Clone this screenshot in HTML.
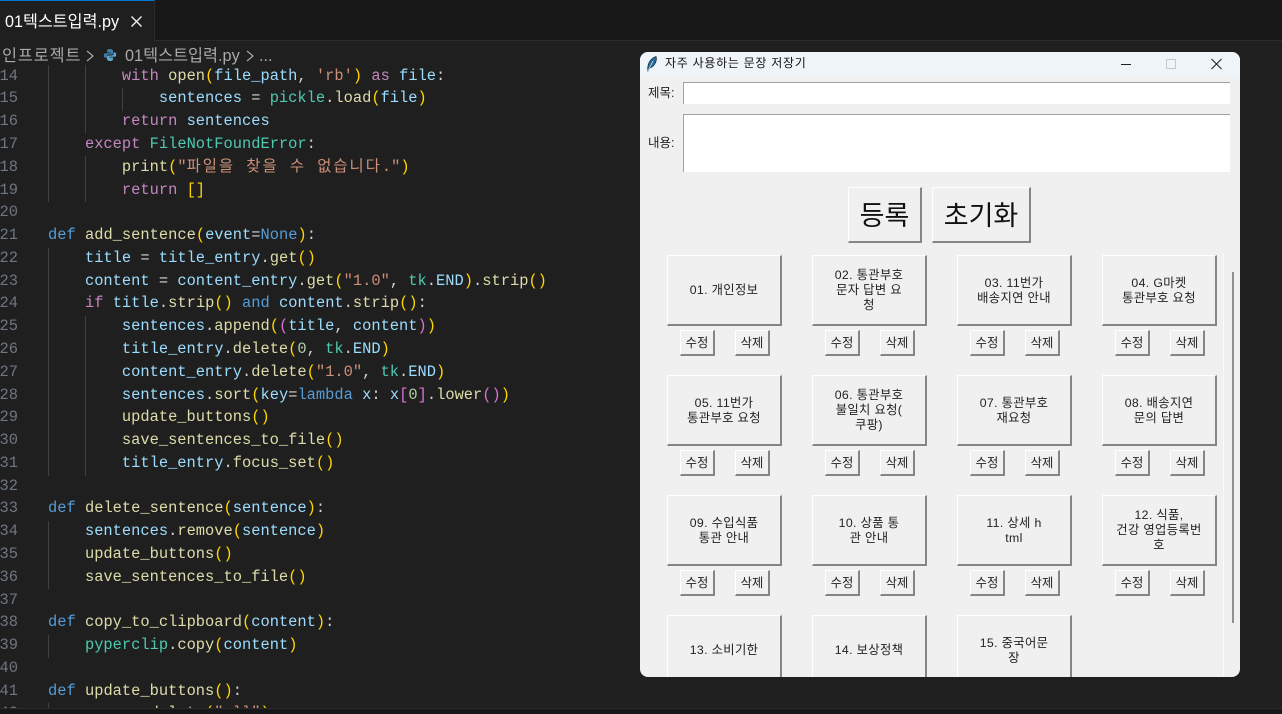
<!DOCTYPE html>
<html lang="ko"><head><meta charset="utf-8"><style>
html,body{margin:0;padding:0;background:#1f1f1f}
body{width:1282px;height:714px;position:relative;overflow:hidden;font-family:"Liberation Sans","Noto Sans CJK KR",sans-serif}
div{position:absolute;box-sizing:border-box}
#tabbar{left:0;top:0;width:1282px;height:41px;background:#181818;border-bottom:1px solid #2b2b2b}
#tab{left:0;top:0;width:155px;height:42px;background:#1f1f1f;border-top:1px solid #0078d4;border-right:1px solid #2b2b2b;color:#fff;font-size:16.2px;line-height:42px;padding-left:5px;white-space:nowrap}
#crumb{left:0;top:45px;height:22px;line-height:22px;font-size:16.3px;color:#a9a9a9;white-space:nowrap}
#code{left:0;top:64.6px;width:640px;height:643.4px;overflow:hidden}
#code pre{position:absolute;left:48px;top:0;margin:0;font:15.4px/22.78px "Liberation Mono","Noto Sans CJK KR",monospace;color:#d4d4d4}
#nums{position:absolute;left:-40px;width:58px;top:0;text-align:right;font:15.4px/22.78px "Liberation Mono",monospace;color:#6e7681;white-space:pre}
.g{width:1px;background:#404040}
#statusline{left:0;top:708px;width:1282px;height:6px;background:#181818;border-top:1px solid #2b2b2b}
.k{color:#c586c0}.d{color:#569cd6}.f{color:#dcdcaa}.v{color:#9cdcfe}.c{color:#4ec9b0}.s{color:#ce9178}.n{color:#b5cea8}.y{color:#ffd700}.p{color:#da70d6}.b{color:#179fff}
.h{letter-spacing:2px}
#win{left:640px;top:52px;width:600px;height:625px;background:#f0f0f0;border-radius:8px;overflow:hidden;color:#000}
#tb{left:0;top:0;width:600px;height:25px;background:#eff4f9}
#ttl{left:25px;top:2px;font-size:12px;line-height:18px;color:#111;white-space:nowrap;letter-spacing:.72px}
.ent{background:#fff;border-top:1px solid #a0a0a0;border-left:1px solid #a0a0a0}
.lb{font-size:12.5px;line-height:16px;color:#222;white-space:nowrap}
.bt{background:#f0f0f0;border-top:1px solid #fff;border-left:1px solid #fff;border-right:2px solid #858585;border-bottom:2px solid #858585;display:flex;align-items:center;justify-content:center;text-align:center;color:#222}
.m{width:115px;height:71px;font-size:12.3px;letter-spacing:.35px;line-height:15px;padding:1px 4px 0}
.e{width:35px;height:26px;font-size:12.3px;line-height:15px;padding-top:1px}
.big{font-size:27px;line-height:34px;color:#111;font-weight:400;padding-top:3px}
</style></head><body>
<div id="tabbar"></div>
<div id="tab">01텍스트입력.py<svg style="position:absolute;left:130px;top:14px" width="13" height="13" viewBox="0 0 13 13"><path d="M1.5 1.5L11.5 11.5M11.5 1.5L1.5 11.5" stroke="#e8e8e8" stroke-width="1.5" fill="none"/></svg></div>
<div id="crumb"><span style="position:absolute;left:2px;letter-spacing:.9px">인프로젝트</span><svg style="position:absolute;left:85px;top:5px" width="10" height="12" viewBox="0 0 10 12"><path d="M2 1L8 6L2 11" stroke="#a9a9a9" stroke-width="1.2" fill="none"/></svg><svg style="position:absolute;left:103px;top:3px" width="14" height="14" viewBox="0 0 14 14"><path d="M7 1C4.5 1 4 2 4 3V4.500H7.500V5.200H2.500C1.200 5.200 .8 6.400 .8 7.400S1.400 9.800 2.500 9.800H4V8C4 7 4.800 6.500 5.600 6.500H8.600C9.400 6.500 10 6 10 5V3C10 2 9 1 7 1Z" fill="#3f7ca8"/><path d="M7 13C9.500 13 10 12 10 11V9.500H6.500V8.800H11.500C12.800 8.800 13.200 7.600 13.200 6.600S12.600 4.200 11.500 4.200H10.600V6C10.600 7 9.200 7.500 8.400 7.500H5.400C4.600 7.500 4 8 4 9V11C4 12 5 13 7 13Z" fill="#5fa6cf"/></svg><span style="position:absolute;left:125px;white-space:nowrap">01텍스트입력.py</span><svg style="position:absolute;left:245px;top:5px" width="10" height="12" viewBox="0 0 10 12"><path d="M2 1L8 6L2 11" stroke="#a9a9a9" stroke-width="1.2" fill="none"/></svg><span style="position:absolute;left:259px">...</span></div>
<div id="code">
<div id="nums">14
15
16
17
18
19
20
21
22
23
24
25
26
27
28
29
30
31
32
33
34
35
36
37
38
39
40
41
42</div>
<div class="g" style="left:48px;top:0;height:137px"></div>
<div class="g" style="left:85px;top:0;height:68px"></div>
<div class="g" style="left:122px;top:23px;height:23px"></div>
<div class="g" style="left:85px;top:91px;height:46px"></div>
<div class="g" style="left:48px;top:183px;height:228px"></div>
<div class="g" style="left:85px;top:251px;height:160px"></div>
<div class="g" style="left:48px;top:456px;height:68px"></div>
<div class="g" style="left:48px;top:570px;height:23px"></div>
<div class="g" style="left:48px;top:638px;height:10px"></div>
<pre>        <span class="k">with</span> <span class="f">open</span><span class="y">(</span><span class="v">file_path</span>, <span class="s">'rb'</span><span class="y">)</span> <span class="k">as</span> <span class="v">file</span>:
            <span class="v">sentences</span> = <span class="c">pickle</span>.<span class="f">load</span><span class="y">(</span><span class="v">file</span><span class="y">)</span>
        <span class="k">return</span> <span class="v">sentences</span>
    <span class="k">except</span> <span class="c">FileNotFoundError</span>:
        <span class="f">print</span><span class="y">(</span><span class="s">"<span class="h">파일을 찾을 수 없습니다</span>."</span><span class="y">)</span>
        <span class="k">return</span> <span class="y">[]</span>

<span class="d">def</span> <span class="f">add_sentence</span><span class="y">(</span><span class="v">event</span>=<span class="d">None</span><span class="y">)</span>:
    <span class="v">title</span> = <span class="v">title_entry</span>.<span class="f">get</span><span class="y">()</span>
    <span class="v">content</span> = <span class="v">content_entry</span>.<span class="f">get</span><span class="y">(</span><span class="s">"1.0"</span>, <span class="c">tk</span>.<span class="v">END</span><span class="y">)</span>.<span class="f">strip</span><span class="y">()</span>
    <span class="k">if</span> <span class="v">title</span>.<span class="f">strip</span><span class="y">()</span> <span class="d">and</span> <span class="v">content</span>.<span class="f">strip</span><span class="y">()</span>:
        <span class="v">sentences</span>.<span class="f">append</span><span class="y">(</span><span class="p">(</span><span class="v">title</span>, <span class="v">content</span><span class="p">)</span><span class="y">)</span>
        <span class="v">title_entry</span>.<span class="f">delete</span><span class="y">(</span><span class="n">0</span>, <span class="c">tk</span>.<span class="v">END</span><span class="y">)</span>
        <span class="v">content_entry</span>.<span class="f">delete</span><span class="y">(</span><span class="s">"1.0"</span>, <span class="c">tk</span>.<span class="v">END</span><span class="y">)</span>
        <span class="v">sentences</span>.<span class="f">sort</span><span class="y">(</span><span class="v">key</span>=<span class="d">lambda</span> <span class="v">x</span>: <span class="v">x</span><span class="p">[</span><span class="n">0</span><span class="p">]</span>.<span class="f">lower</span><span class="p">()</span><span class="y">)</span>
        <span class="f">update_buttons</span><span class="y">()</span>
        <span class="f">save_sentences_to_file</span><span class="y">()</span>
        <span class="v">title_entry</span>.<span class="f">focus_set</span><span class="y">()</span>

<span class="d">def</span> <span class="f">delete_sentence</span><span class="y">(</span><span class="v">sentence</span><span class="y">)</span>:
    <span class="v">sentences</span>.<span class="f">remove</span><span class="y">(</span><span class="v">sentence</span><span class="y">)</span>
    <span class="f">update_buttons</span><span class="y">()</span>
    <span class="f">save_sentences_to_file</span><span class="y">()</span>

<span class="d">def</span> <span class="f">copy_to_clipboard</span><span class="y">(</span><span class="v">content</span><span class="y">)</span>:
    <span class="c">pyperclip</span>.<span class="f">copy</span><span class="y">(</span><span class="v">content</span><span class="y">)</span>

<span class="d">def</span> <span class="f">update_buttons</span><span class="y">()</span>:
    <span class="v">canvas</span>.<span class="f">delete</span><span class="y">(</span><span class="s">"all"</span><span class="y">)</span></pre>
</div>
<div id="statusline"></div>
<div id="win">
<div id="tb"></div>
<svg style="position:absolute;left:5px;top:3px" width="14" height="18" viewBox="0 0 14 18"><path d="M3 16C2 11 4 4 11 1.500C12.500 6 9 12 4.500 13L3 16Z" fill="#2a6f9e" stroke="#0e2f46" stroke-width=".8"/><path d="M3 16L8 6" stroke="#cfe3f0" stroke-width=".7"/></svg>
<div id="ttl">자주 사용하는 문장 저장기</div>
<svg style="position:absolute;left:480px;top:5px" width="70" height="15" viewBox="0 0 70 15"><path d="M1 7.500H11" stroke="#222" stroke-width="1"/><rect x="46.500" y="2.500" width="9" height="9" fill="none" stroke="#c4c8cc"/></svg>
<svg style="position:absolute;left:570px;top:5px" width="16" height="15" viewBox="0 0 16 15"><path d="M1.500 2L11.500 12M11.500 2L1.500 12" stroke="#222" stroke-width="1.100" fill="none"/></svg>
<div class="lb" style="left:8px;top:33px">제목:</div>
<div class="ent" style="left:43px;top:30px;width:547px;height:22px"></div>
<div class="lb" style="left:8px;top:83px">내용:</div>
<div class="ent" style="left:43px;top:62px;width:547px;height:58px"></div>
<div class="bt big" style="left:208px;top:135px;width:74px;height:56px">등록</div>
<div class="bt big" style="left:292px;top:135px;width:99px;height:56px">초기화</div>
<div style="left:583px;top:201px;width:1px;height:424px;background:#fafafa"></div>
<div style="left:592px;top:220px;width:2px;height:351px;background:#8f8f8f"></div>

<div class="bt m" style="left:27px;top:203px">01. 개인정보</div>
<div class="bt e" style="left:40px;top:278px">수정</div><div class="bt e" style="left:95px;top:278px">삭제</div>
<div class="bt m" style="left:172px;top:203px">02. 통관부호<br>문자 답변 요<br>청</div>
<div class="bt e" style="left:185px;top:278px">수정</div><div class="bt e" style="left:240px;top:278px">삭제</div>
<div class="bt m" style="left:317px;top:203px">03. 11번가<br>배송지연 안내</div>
<div class="bt e" style="left:330px;top:278px">수정</div><div class="bt e" style="left:385px;top:278px">삭제</div>
<div class="bt m" style="left:462px;top:203px">04. G마켓<br>통관부호 요청</div>
<div class="bt e" style="left:475px;top:278px">수정</div><div class="bt e" style="left:530px;top:278px">삭제</div>

<div class="bt m" style="left:27px;top:323px">05. 11번가<br>통관부호 요청</div>
<div class="bt e" style="left:40px;top:398px">수정</div><div class="bt e" style="left:95px;top:398px">삭제</div>
<div class="bt m" style="left:172px;top:323px">06. 통관부호<br>불일치 요청(<br>쿠팡)</div>
<div class="bt e" style="left:185px;top:398px">수정</div><div class="bt e" style="left:240px;top:398px">삭제</div>
<div class="bt m" style="left:317px;top:323px">07. 통관부호<br>재요청</div>
<div class="bt e" style="left:330px;top:398px">수정</div><div class="bt e" style="left:385px;top:398px">삭제</div>
<div class="bt m" style="left:462px;top:323px">08. 배송지연<br>문의 답변</div>
<div class="bt e" style="left:475px;top:398px">수정</div><div class="bt e" style="left:530px;top:398px">삭제</div>

<div class="bt m" style="left:27px;top:443px">09. 수입식품<br>통관 안내</div>
<div class="bt e" style="left:40px;top:518px">수정</div><div class="bt e" style="left:95px;top:518px">삭제</div>
<div class="bt m" style="left:172px;top:443px">10. 상품 통<br>관 안내</div>
<div class="bt e" style="left:185px;top:518px">수정</div><div class="bt e" style="left:240px;top:518px">삭제</div>
<div class="bt m" style="left:317px;top:443px">11. 상세 h<br>tml</div>
<div class="bt e" style="left:330px;top:518px">수정</div><div class="bt e" style="left:385px;top:518px">삭제</div>
<div class="bt m" style="left:462px;top:443px">12. 식품,<br>건강 영업등록번<br>호</div>
<div class="bt e" style="left:475px;top:518px">수정</div><div class="bt e" style="left:530px;top:518px">삭제</div>

<div class="bt m" style="left:27px;top:563px">13. 소비기한</div>
<div class="bt m" style="left:172px;top:563px">14. 보상정책</div>
<div class="bt m" style="left:317px;top:563px">15. 중국어문<br>장</div>
</div>
</body></html>
